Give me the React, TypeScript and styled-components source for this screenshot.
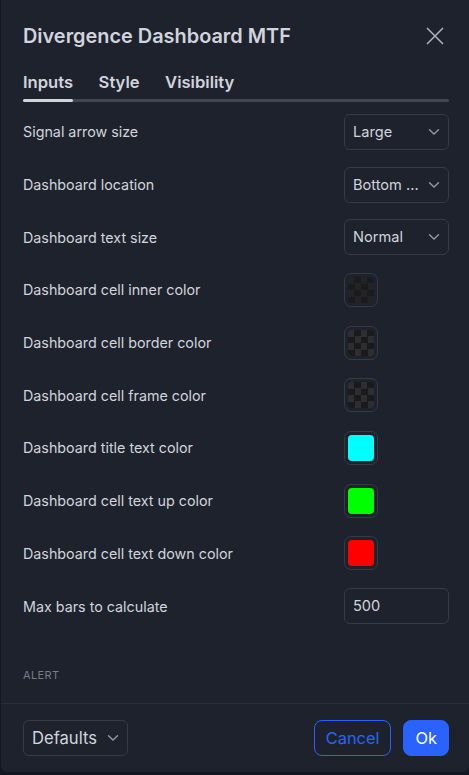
import React from 'react';
import styled, { createGlobalStyle } from 'styled-components';

const GlobalStyle = createGlobalStyle`
  html, body {
    margin: 0;
    padding: 0;
    background: #131722;
  }
  * {
    box-sizing: border-box;
  }
`;

// Styled components
const Dialog = styled.div`
  margin-left: 1px;
  width: 468px;
  height: 772px;
  background: #1e222d;
  border-radius: 0 0 6px 6px;
  display: flex;
  flex-direction: column;
  font-family: Inter, "Noto Sans", sans-serif;
  color: #d1d4dc;
`;

const Header = styled.div`
  height: 70px;
  padding: 1px 22px 0 22px;
  display: flex;
  align-items: center;
  justify-content: space-between;
`;

const Title = styled.h2`
  margin: 0;
  font-size: 19.9px;
  font-weight: 600;
  color: #d1d4dc;
`;

const CloseButton = styled.button`
  width: 24px;
  height: 24px;
  padding: 0;
  border: none;
  background: none;
  display: flex;
  align-items: center;
  justify-content: center;
  color: #b2b5be;
`;

const Tabs = styled.div`
  padding: 0 20px 0 22px;
`;

const TabList = styled.div`
  display: flex;
  gap: 25.5px;
  height: 24px;
`;

const Tab = styled.div`
  font-size: 16.6px;
  font-weight: 600;
  line-height: 24px;
  color: #d1d4dc;
`;

const Track = styled.div`
  margin-top: 5px;
  height: 3px;
  border-radius: 2px;
  background: #434651;
  display: flex;
`;

const Indicator = styled.div`
  width: 50px;
  height: 3px;
  border-radius: 2px;
  background: #d1d4dc;
`;

const Content = styled.div`
  flex: 1;
  padding: 3.5px 20px 0 22px;
  display: flex;
  flex-direction: column;
`;

const Row = styled.div`
  height: 52.7px;
  display: flex;
  align-items: center;
  justify-content: space-between;
`;

const Label = styled.span`
  font-size: 14.3px;
  color: #d1d4dc;
`;

const SelectBox = styled.div`
  width: 105px;
  height: 36px;
  border: 1px solid #363a45;
  border-radius: 6px;
  padding: 0 8px 0 8px;
  display: flex;
  align-items: center;
  justify-content: space-between;
  font-size: 14.6px;
  color: #d1d4dc;
  white-space: nowrap;
`;

const Chevron = styled.svg`
  flex-shrink: 0;
  color: #9598a1;
`;

const TextInput = styled.div`
  width: 105px;
  height: 36px;
  border: 1px solid #363a45;
  border-radius: 6px;
  padding: 0 8px;
  display: flex;
  align-items: center;
  font-size: 14.6px;
  color: #d1d4dc;
`;

const SwatchFrame = styled.div`
  margin-right: 71px;
  width: 34px;
  height: 34px;
  border: 1px solid #363a45;
  border-radius: 7px;
  display: flex;
  align-items: center;
  justify-content: center;
`;

const Swatch = styled.div<{ $color?: string; $checker?: [string, string] }>`
  width: 26px;
  height: 26px;
  border-radius: 4px;
  background: ${(p) =>
    p.$checker
      ? `repeating-conic-gradient(${p.$checker[0]} 0% 25%, ${p.$checker[1]} 0% 50%) 0 0 / 13px 13px`
      : p.$color};
`;

const SectionTitle = styled.div`
  margin-top: 35.5px;
  font-size: 11px;
  line-height: 14px;
  letter-spacing: 0.4px;
  color: #787b86;
`;

const Footer = styled.div`
  border-top: 1px solid #2a2e39;
  padding: 16px 20px 16px 22px;
  display: flex;
  align-items: center;
  justify-content: space-between;
`;

const Actions = styled.div`
  display: flex;
  gap: 12px;
`;

const Button = styled.button<{ $primary?: boolean }>`
  height: 36px;
  padding: 0 11px;
  border-radius: 8px;
  font-family: Inter, "Noto Sans", sans-serif;
  font-size: 16.4px;
  border: 1px solid #2962ff;
  background: ${(p) => (p.$primary ? '#2962ff' : 'transparent')};
  color: ${(p) => (p.$primary ? '#ffffff' : '#2962ff')};
`;

const FooterSelect = styled(SelectBox)`
  font-size: 16.6px;
`;

const ChevronIcon = () => (
  <Chevron width="12" height="8" viewBox="0 0 12 8">
    <path d="M1.5 1.8 6 6 10.5 1.8" fill="none" stroke="currentColor" strokeWidth="1.4" strokeLinecap="round" />
  </Chevron>
);

type Input =
  | { label: string; kind: 'select'; value: string }
  | { label: string; kind: 'color'; color?: string; checker?: [string, string] }
  | { label: string; kind: 'text'; value: string };

const inputs: Input[] = [
  { label: 'Signal arrow size', kind: 'select', value: 'Large' },
  { label: 'Dashboard location', kind: 'select', value: 'Bottom ...' },
  { label: 'Dashboard text size', kind: 'select', value: 'Normal' },
  { label: 'Dashboard cell inner color', kind: 'color', checker: ['#1b1b1d', '#232325'] },
  { label: 'Dashboard cell border color', kind: 'color', checker: ['#1a1a1c', '#2e2e31'] },
  { label: 'Dashboard cell frame color', kind: 'color', checker: ['#1a1a1c', '#2e2e31'] },
  { label: 'Dashboard title text color', kind: 'color', color: '#00ffff' },
  { label: 'Dashboard cell text up color', kind: 'color', color: '#00ff00' },
  { label: 'Dashboard cell text down color', kind: 'color', color: '#ff0000' },
  { label: 'Max bars to calculate', kind: 'text', value: '500' },
];

const App: React.FC = () => {
  return (
    <>
      <GlobalStyle />
      <Dialog>
        <Header>
          <Title>Divergence Dashboard MTF</Title>
          <CloseButton>
            <svg width="20" height="20" viewBox="0 0 20 20">
              <path d="M2 2 18 18 M18 2 2 18" stroke="currentColor" strokeWidth="1.5" />
            </svg>
          </CloseButton>
        </Header>

        <Tabs>
          <TabList>
            <Tab>Inputs</Tab>
            <Tab>Style</Tab>
            <Tab>Visibility</Tab>
          </TabList>
          <Track>
            <Indicator />
          </Track>
        </Tabs>

        <Content>
          {inputs.map((input) => (
            <Row key={input.label}>
              <Label>{input.label}</Label>
              {input.kind === 'select' && (
                <SelectBox>
                  {input.value}
                  <ChevronIcon />
                </SelectBox>
              )}
              {input.kind === 'color' && (
                <SwatchFrame>
                  <Swatch $color={input.color} $checker={input.checker} />
                </SwatchFrame>
              )}
              {input.kind === 'text' && <TextInput>{input.value}</TextInput>}
            </Row>
          ))}
          <SectionTitle>ALERT</SectionTitle>
        </Content>

        <Footer>
          <FooterSelect>
            Defaults
            <ChevronIcon />
          </FooterSelect>
          <Actions>
            <Button>Cancel</Button>
            <Button $primary>Ok</Button>
          </Actions>
        </Footer>
      </Dialog>
    </>
  );
};

export default App;
